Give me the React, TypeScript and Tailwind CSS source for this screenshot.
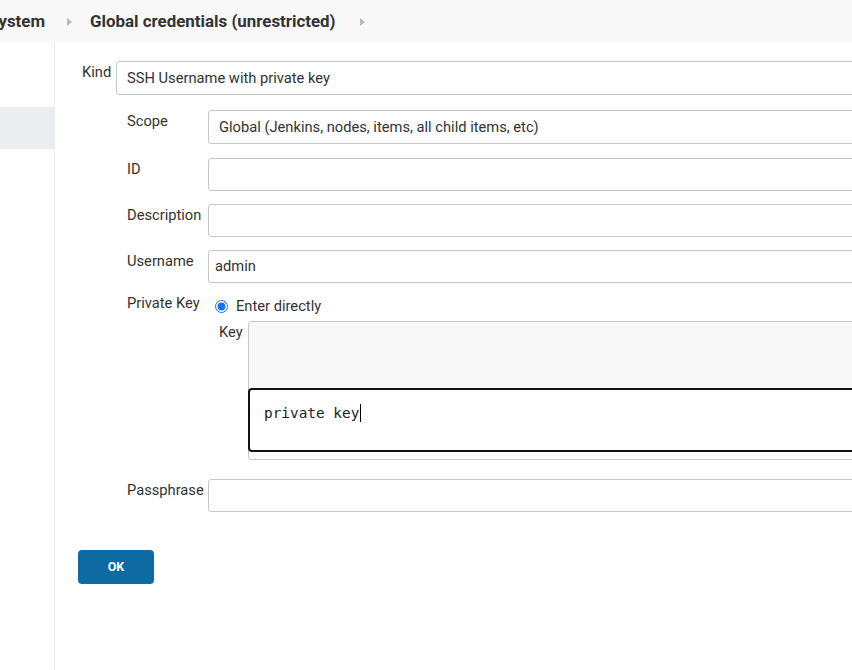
import React from 'react';

const Chevron: React.FC<{ className?: string }> = ({ className }) => (
  <svg className={className} width="5" height="8" viewBox="0 0 5 8">
    <path d="M0 0 L5 4 L0 8 Z" fill="#b8b8b8" />
  </svg>
);

const Field: React.FC<{ label: string; value?: string; h: string; mt: string; pad?: string }> = ({
  label,
  value,
  h,
  mt,
  pad = 'pl-[10px]',
}) => (
  <div className={`flex ${mt}`}>
    <label className="w-[81px] shrink-0 pt-[1px] leading-5">{label}</label>
    <div
      className={`flex-1 ${h} ${pad} flex items-center border border-[#c8c8c8] rounded-[3px] bg-white`}
    >
      {value}
    </div>
  </div>
);

const App: React.FC = () => {
  return (
    <div className="w-[852px] h-[670px] overflow-hidden bg-white text-[14.7px] text-[#333] font-['Roboto','Liberation_Sans',sans-serif]">
      {/* breadcrumb bar */}
      <div className="h-[42px] pt-[2px] bg-[#f8f8f8] flex items-center whitespace-nowrap overflow-hidden">
        <span className="ml-[-12px] text-[16.9px] font-bold">System</span>
        <Chevron className="ml-[22px]" />
        <span className="ml-[18px] text-[16.9px] font-bold">Global credentials (unrestricted)</span>
        <Chevron className="ml-[24px]" />
      </div>

      <div className="flex h-[628px]">
        <aside className="w-[55px] shrink-0 border-r border-[#e6eaed] pt-[65px]">
          <div className="h-[42px] bg-[#e9edf0]" />
        </aside>

        <main className="flex-1 min-w-0 overflow-hidden">
          <div className="w-[1000px] pt-[19px]">
            <div className="pl-[27px]">
              <div className="flex">
                <label className="w-[34px] shrink-0 pt-[1px] leading-5">Kind</label>
                <div className="flex-1 h-[34px] pl-[10px] flex items-center border border-[#c8c8c8] rounded-[3px] bg-white">
                  SSH Username with private key
                </div>
              </div>

              <div className="ml-[45px]">
                <Field
                  label="Scope"
                  value="Global (Jenkins, nodes, items, all child items, etc)"
                  h="h-[34px]"
                  mt="mt-[15px]"
                />
                <Field label="ID" h="h-[33px]" mt="mt-[14px]" />
                <Field label="Description" h="h-[33px]" mt="mt-[13px]" />
                <Field label="Username" value="admin" h="h-[33px]" mt="mt-[13px]" pad="pl-[6px]" />

                {/* private key */}
                <div className="flex mt-[10px]">
                  <label className="w-[81px] shrink-0 leading-5">Private Key</label>
                  <div className="flex-1">
                    <div className="flex items-center h-5 mt-[3px] ml-[7px]">
                      <input
                        type="radio"
                        checked
                        readOnly
                        className="m-0 w-[13px] h-[13px] accent-[#1a73e8]"
                      />
                      <span className="ml-[8px] leading-5">Enter directly</span>
                    </div>
                    <div className="flex mt-[5px] ml-[11px]">
                      <label className="w-[29px] shrink-0 pt-[1px] leading-5">Key</label>
                      <div className="flex-1 h-[139px] border border-[#c8c8c8] rounded-[3px] bg-[#fdfdfd]">
                        <div className="h-[66px] bg-[#f8f8f8] rounded-t-[3px]" />
                        <div className="-ml-px h-[64px] border-2 border-[#111] rounded-[4px] bg-white pl-[14px] pt-[12px]">
                          <span className="font-['DejaVu_Sans_Mono','Liberation_Mono',monospace] text-[14.4px] leading-5 text-[#222]">
                            private key
                          </span>
                          <span className="inline-block w-px h-[18px] bg-black align-middle ml-[1px] -mt-[2px]" />
                        </div>
                      </div>
                    </div>
                  </div>
                </div>

                <Field label="Passphrase" h="h-[33px]" mt="mt-[19px]" />
              </div>
            </div>

            <div className="pl-[23px] mt-[38px]">
              <button className="w-[76px] h-[34px] rounded-[4px] bg-[#0d6aa3] text-white text-[12.5px] font-bold">
                OK
              </button>
            </div>
          </div>
        </main>
      </div>
    </div>
  );
};

export default App;
